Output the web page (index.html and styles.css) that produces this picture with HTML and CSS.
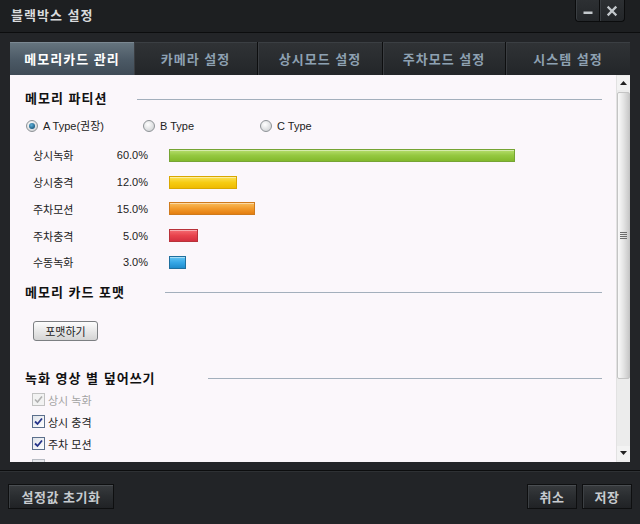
FILE: index.html
```html
<!DOCTYPE html>
<html lang="ko">
<head>
<meta charset="utf-8">
<title>블랙박스 설정</title>
<link rel="stylesheet" href="styles.css">
</head>
<body>
<div class="win">
  <header class="titlebar">
    <span class="title">블랙박스 설정</span>
    <div class="winbtns">
      <button class="wb wb-min" aria-label="최소화"><svg width="12" height="12" viewBox="0 0 12 12"><rect x="1.5" y="6.5" width="9" height="2.5" fill="#c3c8cc"/></svg></button>
      <button class="wb wb-close" aria-label="닫기"><svg width="12" height="12" viewBox="0 0 12 12"><path d="M2.5 2.5 L9.5 9.5 M9.5 2.5 L2.5 9.5" stroke="#c3c8cc" stroke-width="2.3" stroke-linecap="square"/></svg></button>
    </div>
  </header>

  <nav class="tabs">
    <div class="tab active t1">메모리카드 관리</div>
    <div class="tab t2">카메라 설정</div>
    <div class="tab t3">상시모드 설정</div>
    <div class="tab t4">주차모드 설정</div>
    <div class="tab t5">시스템 설정</div>
  </nav>

  <section class="panel">
    <div class="content">
      <div class="sec">
        <span class="sec-title w1">메모리 파티션</span>
        <span class="sec-line"></span>
      </div>

      <div class="radios">
        <label class="radio"><span class="rdot on"></span>A Type(권장)</label>
        <label class="radio"><span class="rdot"></span>B Type</label>
        <label class="radio"><span class="rdot"></span>C Type</label>
      </div>

      <div class="bars">
        <div class="brow"><span class="blabel">상시녹화</span><span class="bpct">60.0%</span><span class="bar green" style="width:346px"></span></div>
        <div class="brow"><span class="blabel">상시충격</span><span class="bpct">12.0%</span><span class="bar yellow" style="width:68px"></span></div>
        <div class="brow"><span class="blabel">주차모션</span><span class="bpct">15.0%</span><span class="bar orange" style="width:86px"></span></div>
        <div class="brow"><span class="blabel">주차충격</span><span class="bpct">5.0%</span><span class="bar red" style="width:29px"></span></div>
        <div class="brow"><span class="blabel">수동녹화</span><span class="bpct">3.0%</span><span class="bar blue" style="width:17px"></span></div>
      </div>

      <div class="sec sec2">
        <span class="sec-title w2">메모리 카드 포맷</span>
        <span class="sec-line"></span>
      </div>

      <button class="fmt-btn">포맷하기</button>

      <div class="sec sec3">
        <span class="sec-title w3">녹화 영상 별 덮어쓰기</span>
        <span class="sec-line"></span>
      </div>

      <div class="checks">
        <label class="check disabled"><span class="cbox"><svg width="9" height="9" viewBox="0 0 9 9"><path d="M1 4.5 L3.5 7 L8 1.5" fill="none" stroke="#b0b0b0" stroke-width="1.6"/></svg></span>상시 녹화</label>
        <label class="check"><span class="cbox"><svg width="9" height="9" viewBox="0 0 9 9"><path d="M1 4.5 L3.5 7 L8 1.5" fill="none" stroke="#26348a" stroke-width="1.8"/></svg></span>상시 충격</label>
        <label class="check"><span class="cbox"><svg width="9" height="9" viewBox="0 0 9 9"><path d="M1 4.5 L3.5 7 L8 1.5" fill="none" stroke="#26348a" stroke-width="1.8"/></svg></span>주차 모션</label>
        <div class="check"><span class="cbox faint"></span></div>
      </div>
    </div>

    <div class="scrollbar">
      <div class="sb-btn sb-up"><svg width="7" height="4" viewBox="0 0 7 4"><path d="M0 4 L3.5 0 L7 4 Z" fill="#222"/></svg></div>
      <div class="sb-thumb"><span class="grip"></span></div>
      <div class="sb-track"></div>
      <div class="sb-btn sb-down"><svg width="7" height="4" viewBox="0 0 7 4"><path d="M0 0 L3.5 4 L7 0 Z" fill="#222"/></svg></div>
    </div>
  </section>

  <footer class="footer">
    <button class="fbtn reset">설정값 초기화</button>
    <div class="fright">
      <button class="fbtn small">취소</button>
      <button class="fbtn small">저장</button>
    </div>
  </footer>
</div>
</body>
</html>
```

FILE: styles.css
```css
* { box-sizing: border-box; }
html, body { margin: 0; padding: 0; }
body {
  width: 640px;
  height: 524px;
  background: #222427;
  font-family: "Liberation Sans", "Noto Sans CJK KR", sans-serif;
  overflow: hidden;
}
.win {
  width: 640px;
  height: 524px;
  display: flex;
  flex-direction: column;
  background: #232528;
}

/* title bar */
.titlebar {
  height: 33px;
  flex: none;
  display: flex;
  justify-content: space-between;
  align-items: flex-start;
  background: #1d1f21;
  border-bottom: 1px solid #0c0d0e;
  padding: 0 15px 0 11px;
}
.title {
  font-family: "Noto Sans CJK KR", sans-serif;
  font-weight: bold;
  font-size: 13px;
  letter-spacing: 1px;
  line-height: 16px;
  margin-top: 7px;
  color: #d9dbdd;
}
.winbtns {
  display: flex;
}
.wb {
  width: 25px;
  height: 22px;
  padding: 0;
  margin: 0;
  border: 1px solid #0b0c0d;
  border-top: none;
  background: linear-gradient(#2d3033, #232629);
  box-shadow: inset 1px 0 0 #3a3e42;
  display: flex;
  align-items: center;
  justify-content: center;
}
.wb-min { border-bottom-left-radius: 4px; border-right: 1px solid #0b0c0d; }
.wb-close { border-bottom-right-radius: 4px; border-left: none; }

/* tabs */
.tabs {
  flex: none;
  display: flex;
  height: 33px;
  margin: 9px 0 0 10px;
  width: 620px;
}
.tab {
  height: 33px;
  display: flex;
  align-items: center;
  justify-content: center;
  font-family: "Noto Sans CJK KR", sans-serif;
  font-weight: bold;
  font-size: 13px;
  letter-spacing: 1px;
  color: #8ea1b2;
  background: linear-gradient(#303336, #232629);
  border-left: 1px solid #0d0e0f;
  box-shadow: inset 1px 0 0 #3a3d41, inset 0 1px 0 #3b3f43;
}
.tab.active {
  color: #ffffff;
  background: linear-gradient(#66757f, #4b5965 55%, #3f4b56);
  border-left: none;
  box-shadow: inset 0 1px 0 #7b8892;
}
.t1 { width: 124px; }
.t2 { width: 123px; border-left: none; }
.t3 { width: 125px; }
.t4 { width: 123px; }
.t5 { width: 125px; }

/* panel */
.panel {
  flex: none;
  display: flex;
  width: 620px;
  height: 387px;
  margin-left: 10px;
  background: #fbf7fb;
  overflow: hidden;
}
.content {
  width: 606px;
  height: 387px;
  padding: 15px 14px 0 15px;
  overflow: hidden;
  font-family: "Liberation Sans", "Noto Sans CJK KR", sans-serif;
  font-size: 11px;
  color: #222;
}
.sec {
  display: flex;
  align-items: center;
  height: 16px;
}
.sec-title {
  flex: none;
  font-family: "Noto Sans CJK KR", sans-serif;
  font-weight: bold;
  font-size: 13px;
  letter-spacing: 1px;
  line-height: 16px;
  color: #111;
}
.w1 { width: 112px; }
.w2 { width: 140px; }
.w3 { width: 183px; }
.sec-line {
  flex: 1;
  height: 1px;
  background: #a3afbc;
  margin-top: 2px;
}

.radios {
  display: flex;
  height: 16px;
  margin-top: 12px;
  padding-left: 1px;
}
.radio {
  width: 117px;
  display: flex;
  align-items: center;
  gap: 4px;
  font-size: 11px;
  color: #222;
  line-height: 16px;
}
.rdot {
  width: 12px;
  height: 12px;
  border-radius: 50%;
  border: 1px solid #8e9397;
  background: radial-gradient(circle at 40% 35%, #ffffff, #d8dadc 70%, #c2c5c8);
  display: flex;
  align-items: center;
  justify-content: center;
  margin-right: 1px;
}
.rdot.on::after {
  content: "";
  width: 6px;
  height: 6px;
  border-radius: 50%;
  background: radial-gradient(circle at 40% 35%, #5fb0d8, #1e5f86 70%, #143f5c);
}

.bars {
  margin-top: 8px;
  padding-left: 8px;
}
.brow {
  height: 26.75px;
  display: flex;
  align-items: center;
}
.blabel {
  width: 80px;
  font-family: "Noto Sans CJK KR", sans-serif;
  font-size: 11px;
  line-height: 14px;
  color: #222;
}
.bpct {
  width: 35px;
  text-align: right;
  font-size: 11px;
  color: #222;
  margin-right: 21px;
}
.bar {
  height: 13px;
  border: 1px solid;
  box-shadow: inset 0 1px 0 rgba(255,255,255,0.45);
}
.green { background: linear-gradient(#b5dd6c, #94c840 50%, #82b92c); border-color: #76a434; }
.yellow { background: linear-gradient(#fbe25a, #f6cc12 50%, #eebb00); border-color: #d9a800; }
.orange { background: linear-gradient(#f9bd5c, #f29b2c 50%, #e47e10); border-color: #cf7a1c; }
.red { background: linear-gradient(#f46b72, #e8434d 50%, #d43040); border-color: #b8323a; }
.blue { background: linear-gradient(#62c4f2, #36a7e6 50%, #1f8ccc); border-color: #1f6f9e; }

.sec2 { margin-top: 8px; }
.fmt-btn {
  display: block;
  margin: 21px 0 0 8px;
  width: 65px;
  height: 20px;
  padding: 0;
  border: 1px solid #7c7f82;
  border-radius: 3px;
  background: linear-gradient(#fdfdfd, #e8e8e8 50%, #d4d4d4);
  font-family: "Noto Sans CJK KR", sans-serif;
  font-size: 11px;
  color: #222;
  line-height: 16px;
}
.sec3 { margin-top: 29px; }

.checks {
  margin-top: 3px;
  padding-left: 7px;
}
.check {
  height: 22px;
  display: flex;
  align-items: center;
  gap: 3px;
  font-family: "Noto Sans CJK KR", sans-serif;
  font-size: 11px;
  color: #222;
}
.cbox {
  width: 13px;
  height: 13px;
  border: 1px solid #5b6f8c;
  background: linear-gradient(135deg, #dfe3ea, #ffffff);
  display: flex;
  align-items: center;
  justify-content: center;
}
.cbox.faint { border-color: #b8bcc4; background: #e6e8ec; }
.check.disabled { color: #a3a3a3; }
.check.disabled .cbox { border-color: #c2c2c2; background: #f2f2f2; }

/* scrollbar */
.scrollbar {
  width: 14px;
  height: 387px;
  display: flex;
  flex-direction: column;
  background: #ececec;
  border-left: 1px solid #e2e2e2;
}
.sb-btn {
  height: 14px;
  flex: none;
  display: flex;
  align-items: center;
  justify-content: center;
  background: #f3f3f3;
}
.sb-up { margin-top: 1px; }
.sb-thumb {
  flex: none;
  height: 287px;
  margin: 2px 0 0 0;
  background: linear-gradient(90deg, #fafafa, #e4e4e4 50%, #c9c9c9);
  border: 1px solid #c4c4c4;
  border-radius: 2px;
  display: flex;
  align-items: center;
  justify-content: center;
}
.grip {
  width: 7px;
  height: 7px;
  background: repeating-linear-gradient(#6d6d6d 0 1px, transparent 1px 2px);
}
.sb-track { flex: 1; }
.sb-down { margin-bottom: 2px; }

/* footer */
.footer {
  flex: none;
  margin-top: 8px;
  border-top: 1px solid #0c0d0e;
  box-shadow: inset 0 1px 0 #2e3134;
  height: 54px;
  display: flex;
  justify-content: space-between;
  align-items: flex-start;
  padding: 13px 8px 0 8px;
  background: #222427;
}
.fright { display: flex; gap: 5px; }
.fbtn {
  height: 25px;
  padding: 0;
  border: 1px solid #0e0f10;
  background: linear-gradient(#383b3e, #2a2d30 50%, #202225);
  box-shadow: inset 0 1px 0 #4a4e52, inset 1px 0 0 #3c4044;
  font-family: "Noto Sans CJK KR", sans-serif;
  font-weight: bold;
  font-size: 13px;
  letter-spacing: 0.5px;
  color: #c7cbcf;
  line-height: 16px;
}
.reset { width: 106px; }
.small { width: 50px; }
```
